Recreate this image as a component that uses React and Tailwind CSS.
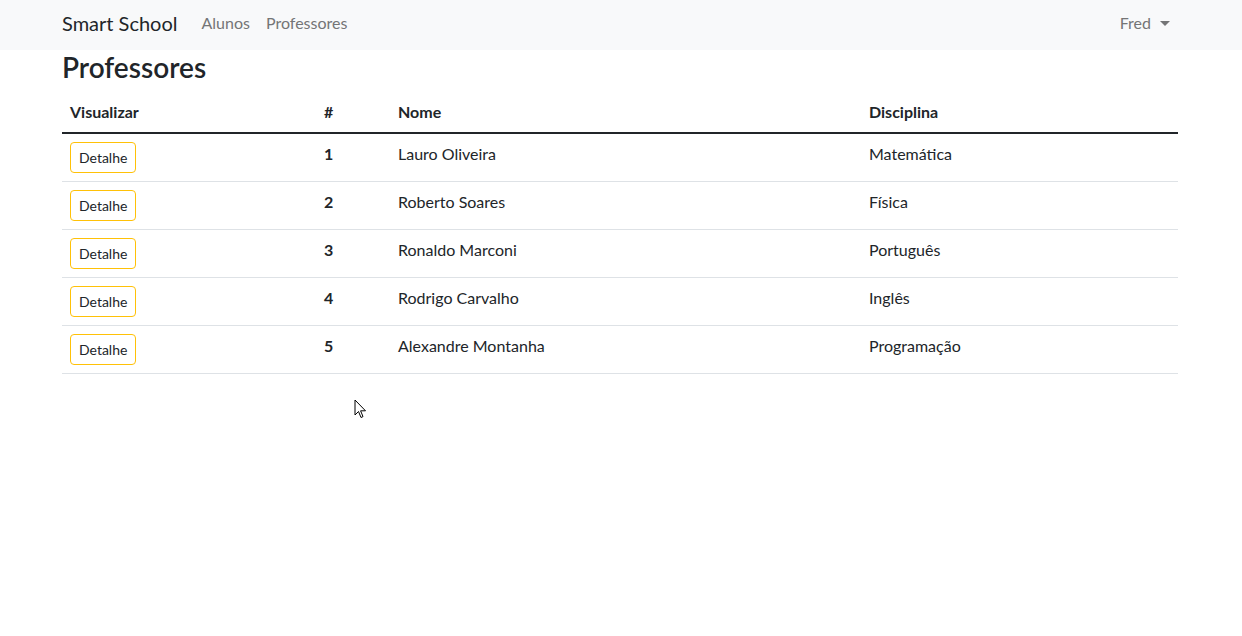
import React from 'react';

const professores = [
  { id: 1, nome: 'Lauro Oliveira', disciplina: 'Matemática' },
  { id: 2, nome: 'Roberto Soares', disciplina: 'Física' },
  { id: 3, nome: 'Ronaldo Marconi', disciplina: 'Português' },
  { id: 4, nome: 'Rodrigo Carvalho', disciplina: 'Inglês' },
  { id: 5, nome: 'Alexandre Montanha', disciplina: 'Programação' },
];

function Navbar() {
  return (
    <nav className="h-[50px] bg-[#f8f9fa]">
      <div className="ml-[62px] flex h-full w-[1116px] items-center pb-[4px]">
        <a className="mr-4 text-[20px] leading-[30px] text-[#212529]">Smart School</a>
        <a className="px-2 text-base leading-6 text-[#747576]">Alunos</a>
        <a className="px-2 text-base leading-6 text-[#747576]">Professores</a>
        <div className="ml-auto flex items-center px-2 text-base leading-6 text-[#747576]">
          Fred
          <span className="ml-[9px] mt-[1px] h-0 w-0 border-x-[5px] border-t-[5px] border-x-transparent border-t-[#747576]" />
        </div>
      </div>
    </nav>
  );
}

function App() {
  return (
    <div className="relative min-h-[636px] bg-white text-[#212529]" style={{ fontFamily: 'Lato, "Open Sans", sans-serif' }}>
      <Navbar />
      <main className="ml-[62px] w-[1116px]">
        <h3 className="mb-2 pt-[2px] text-[28px] font-semibold leading-[31.6px]">Professores</h3>
        <table className="w-full border-collapse text-base leading-6">
          <thead>
            <tr className="border-b-2 border-[#212529] text-left">
              <th className="w-[254px] p-2 font-bold">Visualizar</th>
              <th className="w-[74px] p-2 font-bold">#</th>
              <th className="w-[471px] p-2 font-bold">Nome</th>
              <th className="p-2 font-bold">Disciplina</th>
            </tr>
          </thead>
          <tbody>
            {professores.map((p) => (
              <tr key={p.id} className="border-b border-[#dee2e6] align-top">
                <td className="p-2">
                  <button className="rounded-[4px] border border-[#ffc107] px-2 py-1 text-sm leading-[21px] text-[#212529]">
                    Detalhe
                  </button>
                </td>
                <td className="p-2 font-bold">{p.id}</td>
                <td className="p-2">{p.nome}</td>
                <td className="p-2">{p.disciplina}</td>
              </tr>
            ))}
          </tbody>
        </table>
      </main>
      <svg className="absolute left-[354px] top-[399px]" width="13" height="20" viewBox="0 0 13 20">
        <path d="M1 1 L1 16 L4.5 12.5 L7 18.5 L9 17.6 L6.6 11.8 L11.5 11.8 Z" fill="#fff" stroke="#000" strokeWidth="1" strokeLinejoin="round" />
      </svg>
    </div>
  );
}

export default App;
